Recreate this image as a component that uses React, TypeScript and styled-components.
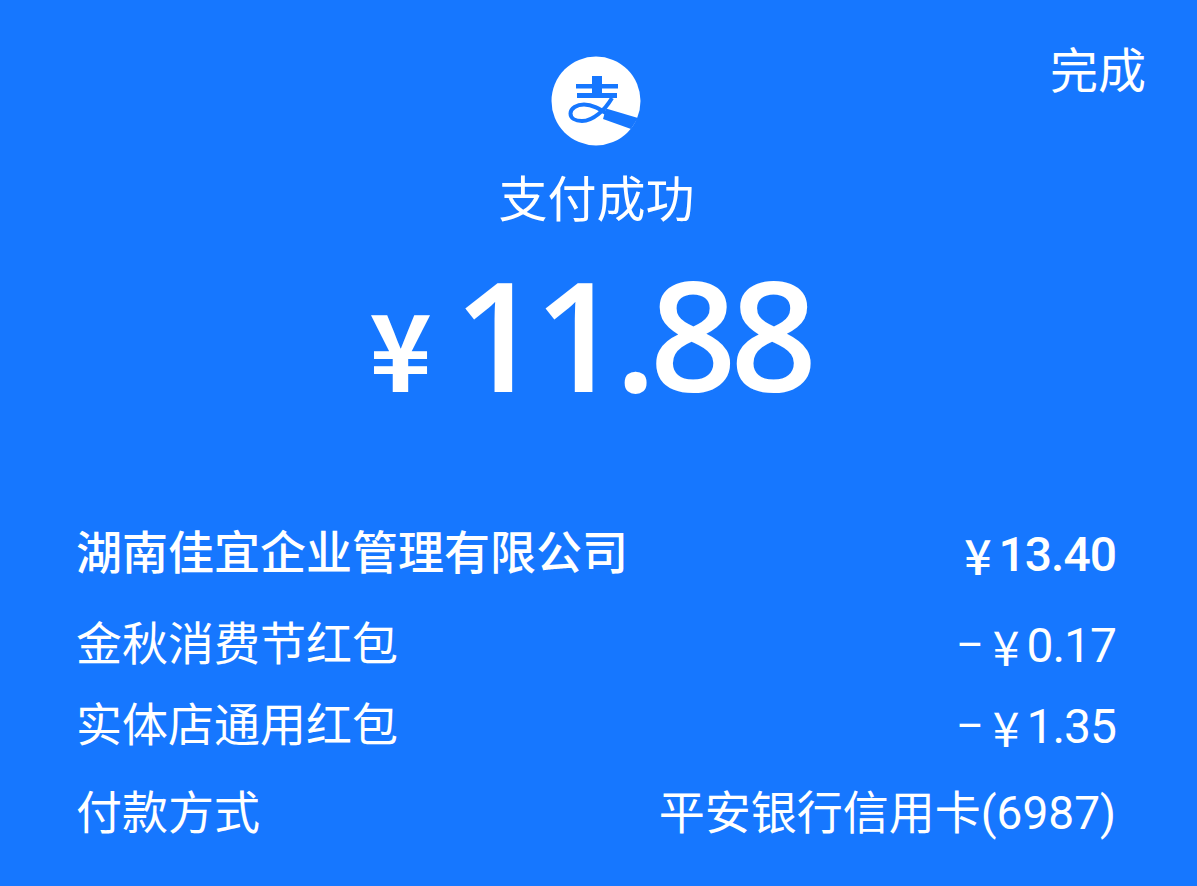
import React from "react";
import styled, { createGlobalStyle } from "styled-components";

const GlobalStyle = createGlobalStyle`
  html, body {
    margin: 0;
    padding: 0;
    background: #1677ff;
  }
`;

const Page = styled.div`
  width: 1197px;
  height: 886px;
  overflow: hidden;
  box-sizing: border-box;
  background: #1677ff;
  color: #fff;
  font-family: Roboto, "Noto Sans CJK SC", sans-serif;
  padding-top: 47px;
`;

const TopBar = styled.div`
  display: flex;
  justify-content: flex-end;
  height: 50px;
  margin-bottom: -41px;
  padding-right: 51px;
`;

const Done = styled.div`
  font-size: 48px;
  line-height: 50px;
`;

const Head = styled.div`
  display: flex;
  flex-direction: column;
  align-items: center;
`;

const Logo = styled.svg`
  width: 90px;
  height: 90px;
  margin-left: -5px;
`;

const Status = styled.div`
  font-size: 49px;
  line-height: 60px;
  margin-top: 25px;
  margin-left: -4px;
`;

const Amount = styled.div`
  display: flex;
  align-items: baseline;
  margin-top: 31px;
  margin-left: -17px;
  line-height: 144px;
`;

const AmountSign = styled.span`
  font-family: "Noto Sans CJK SC", sans-serif;
  font-size: 106px;
  font-weight: 700;
  margin-right: 22px;
`;

const AmountValue = styled.span`
  font-family: "Open Sans", sans-serif;
  font-size: 152px;
  font-weight: 600;
  letter-spacing: -6.500px;
`;

const Rows = styled.div`
  display: flex;
  flex-direction: column;
  padding: 0 81px 0 76px;
  margin-top: 81px;
`;

const Row = styled.div<{ $height: number; $bold?: boolean }>`
  display: flex;
  justify-content: space-between;
  align-items: center;
  height: ${(p) => p.$height}px;
  font-size: 46px;
  font-weight: ${(p) => (p.$bold ? 500 : 400)};
`;

const Value = styled.span`
  display: flex;
  align-items: center;
  padding-top: 10px;
  font-size: 48px;
  letter-spacing: -1px;
`;

const Yen = styled.span`
  font-family: "Noto Sans CJK SC", sans-serif;
  margin: 0 8px 0 10px;
`;

const Minus = styled.span`
  font-size: 42px;
  font-weight: 400;
`;

const rows = [
  { label: "湖南佳宜企业管理有限公司", minus: false, amount: "13.40", height: 100, bold: true },
  { label: "金秋消费节红包", minus: true, amount: "0.17", height: 82 },
  { label: "实体店通用红包", minus: true, amount: "1.35", height: 80 },
];

export default function App() {
  return (
    <Page>
      <GlobalStyle />
      <TopBar>
        <Done>完成</Done>
      </TopBar>
      <Head>
        <Logo viewBox="0 0 90 90">
          <circle cx="45" cy="45" r="44.5" fill="#fff" />
          <path d="M41 20h10v8h16v4.5H51V37h15v5H26v-5h15v-4.500H25V28h16z" fill="#1677ff" />
          <path
            d="M61 42C54 54 42 65 31 65 24 65 19.500 62 19.500 57.500 19.500 52 26 48.500 33 48.500 42 48.500 50 54 58 59"
            fill="none"
            stroke="#1677ff"
            strokeWidth="4"
          />
          <path d="M55 52.500L87 62 80 73 52 63z" fill="#1677ff" />
        </Logo>
        <Status>支付成功</Status>
        <Amount>
          <AmountSign>¥</AmountSign>
          <AmountValue>11.88</AmountValue>
        </Amount>
      </Head>
      <Rows>
        {rows.map((r) => (
          <Row key={r.label} $height={r.height} $bold={r.bold}>
            <span>{r.label}</span>
            <Value>
              {r.minus && <Minus>–</Minus>}
              <Yen>¥</Yen>
              {r.amount}
            </Value>
          </Row>
        ))}
        <Row $height={96}>
          <span>付款方式</span>
          <span>平安银行信用卡(6987)</span>
        </Row>
      </Rows>
    </Page>
  );
}
